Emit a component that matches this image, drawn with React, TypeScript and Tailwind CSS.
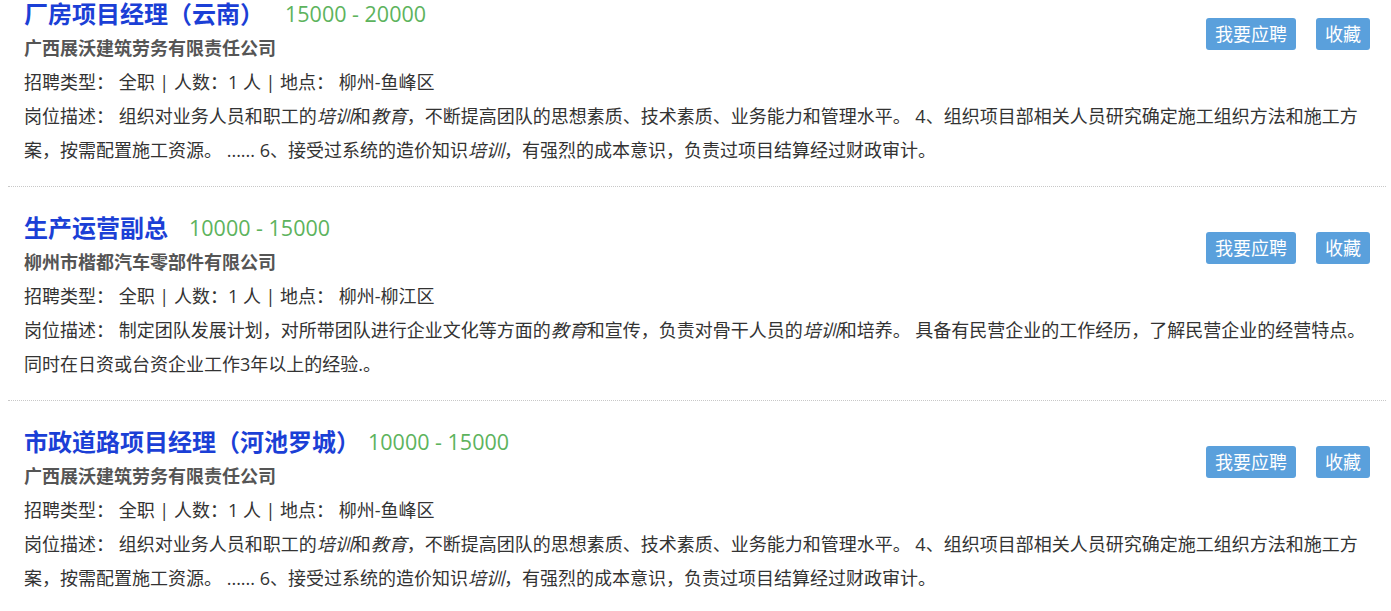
import React from "react";

type Job = {
  title: string;
  salary: string;
  gap: string;
  company: string;
  place: string;
  desc: React.ReactNode;
};

const jobs: Job[] = [
  {
    title: "厂房项目经理（云南）",
    salary: "15000 - 20000",
    gap: "ml-[21px]",
    company: "广西展沃建筑劳务有限责任公司",
    place: "柳州-鱼峰区",
    desc: (
      <>
        组织对业务人员和职工的<em>培训</em>和<em>教育</em>，不断提高团队的思想素质、技术素质、业务能力和管理水平。 4、组织项目部相关人员研究确定施工组织方法和施工方案，按需配置施工资源。 ...... 6、接受过系统的造价知识<em>培训</em>，有强烈的成本意识，负责过项目结算经过财政审计。
      </>
    ),
  },
  {
    title: "生产运营副总",
    salary: "10000 - 15000",
    gap: "ml-[21px]",
    company: "柳州市楷都汽车零部件有限公司",
    place: "柳州-柳江区",
    desc: (
      <>
        制定团队发展计划，对所带团队进行企业文化等方面的<em>教育</em>和宣传，负责对骨干人员的<em>培训</em>和培养。 具备有民营企业的工作经历，了解民营企业的经营特点。同时在日资或台资企业工作3年以上的经验.。
      </>
    ),
  },
  {
    title: "市政道路项目经理（河池罗城）",
    salary: "10000 - 15000",
    gap: "ml-[8px]",
    company: "广西展沃建筑劳务有限责任公司",
    place: "柳州-鱼峰区",
    desc: (
      <>
        组织对业务人员和职工的<em>培训</em>和<em>教育</em>，不断提高团队的思想素质、技术素质、业务能力和管理水平。 4、组织项目部相关人员研究确定施工组织方法和施工方案，按需配置施工资源。 ...... 6、接受过系统的造价知识<em>培训</em>，有强烈的成本意识，负责过项目结算经过财政审计。
      </>
    ),
  },
];

function JobItem({ job }: { job: Job }) {
  return (
    <div className="border-b border-dotted border-[#c8c8c8] pt-6 pb-[19px] pl-4 pr-4">
      <div className="float-right mt-[21px] flex gap-5">
        <button className="h-8 rounded-[3px] bg-[#5aa0dc] px-[9px] text-[18px] leading-8 text-white">
          我要应聘
        </button>
        <button className="h-8 rounded-[3px] bg-[#5aa0dc] px-[9px] text-[18px] leading-8 text-white">
          收藏
        </button>
      </div>
      <div className="flex h-[34px] items-center">
        <span className="text-[24px] font-bold text-[#1b3fd6]">{job.title}</span>
        <span className={`${job.gap} text-[21.5px] text-[#5db35d]`}>{job.salary}</span>
      </div>
      <div className="text-[18px] font-bold leading-[34px] text-[#555]">{job.company}</div>
      <div className="text-[18px] leading-[34px] text-[#333]">
        招聘类型： 全职 | 人数：1 人 | 地点： {job.place}
      </div>
      <div className="text-[18px] leading-[34px] text-[#333]">岗位描述： {job.desc}</div>
    </div>
  );
}

export default function App() {
  return (
    <div className="h-[611px] w-[1391px] overflow-hidden bg-white font-['Open_Sans','Noto_Sans_CJK_SC',sans-serif]">
      <div className="-mt-[27px] pl-2 pr-[5px]">
        {jobs.map((job, i) => (
          <JobItem key={i} job={job} />
        ))}
      </div>
    </div>
  );
}
